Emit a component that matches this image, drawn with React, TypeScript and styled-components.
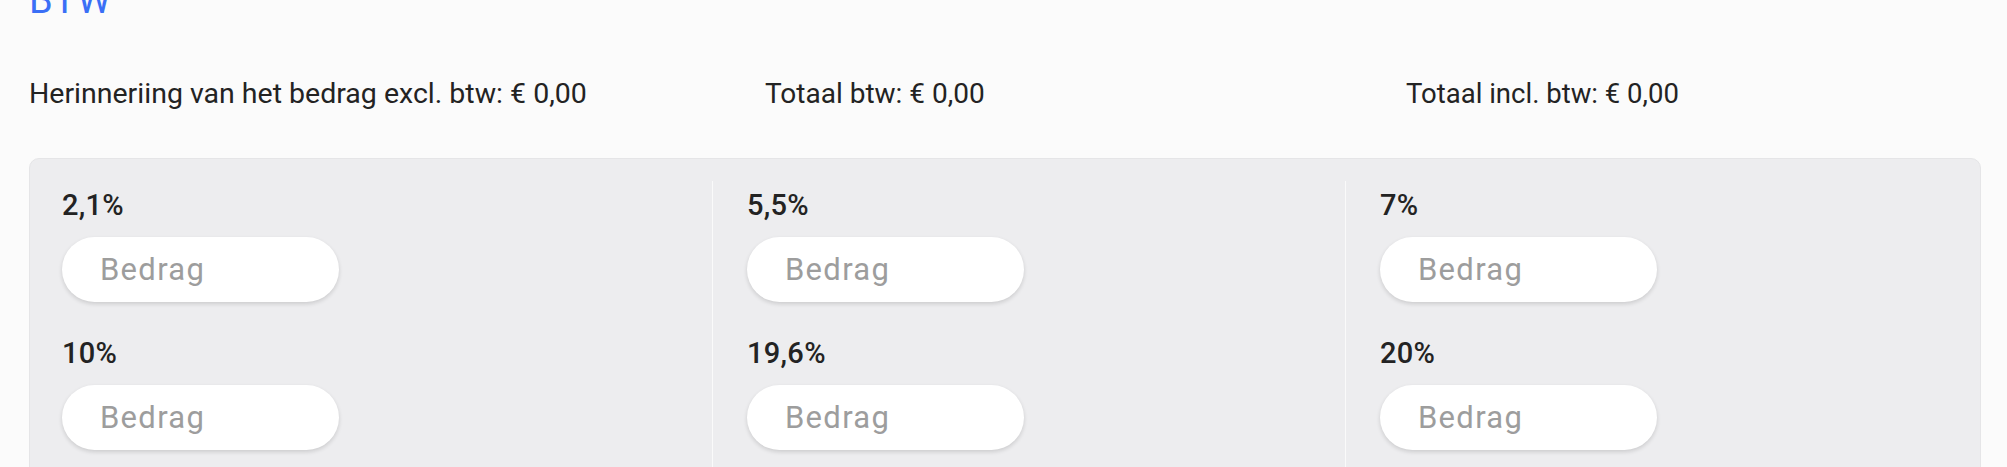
import React, { FC } from 'react'
import styled, { createGlobalStyle } from 'styled-components'

let GlobalStyle = createGlobalStyle`
	html, body {
		margin: 0;
		padding: 0;
		background: #fbfbfb;
		font-family: Roboto, "Liberation Sans", Arial, sans-serif;
		color: #222222;
	}
`

let Page = styled.div`
	padding: 0 26px 0 29px;
	overflow: hidden;
	height: 467px;
	box-sizing: border-box;
`

let Title = styled.h2`
	margin: -22px 0 0;
	font-size: 38px;
	line-height: 1.2;
	font-weight: 400;
	letter-spacing: 1px;
	color: #3a6ff6;
`

let Summary = styled.div`
	display: grid;
	grid-template-columns: 736px 641px 1fr;
	margin-top: 53px;
`

let SummaryItem = styled.div<{ size?: number }>`
	font-size: ${p => p.size ? `${p.size}px` : '28px'};
	line-height: 34px;
	color: #232323;
	white-space: nowrap;
`

let Panel = styled.div`
	margin-top: 47px;
	display: grid;
	grid-template-columns: 682px 633px 1fr;
	background: #ededef;
	border: 1px solid #e5e5e7;
	border-radius: 10px;
	padding: 22px 0 40px;
`

let Column = styled.div<{ divided?: boolean }>`
	display: flex;
	flex-direction: column;
	align-items: flex-start;
	padding: 7px 0 0 ${p => p.divided ? '34px' : '32px'};
	border-left: ${p => p.divided ? '1px solid #fafafa' : 'none'};
`

let Field = styled.div`
	display: flex;
	flex-direction: column;
	align-items: flex-start;
	gap: 15px;
	margin-bottom: 34px;
`

let Label = styled.label`
	font-size: 29px;
	line-height: 34px;
	font-weight: 500;
	letter-spacing: 0.3px;
	color: #232323;
`

let Input = styled.input`
	width: 277px;
	height: 65px;
	box-sizing: border-box;
	border: none;
	outline: none;
	border-radius: 33px;
	background: #ffffff;
	box-shadow: 0 2px 4px rgba(0, 0, 0, 0.14);
	padding: 0 0 0 38px;
	font-family: Roboto, "Liberation Sans", Arial, sans-serif;
	font-size: 31px;
	letter-spacing: 1.3px;
	color: #222222;

	&::placeholder {
		color: #9d9d9d;
	}
`

let rates = [
	['2,1%', '10%'],
	['5,5%', '19,6%'],
	['7%', '20%'],
]

let RateField: FC<{ rate: string }> = ({ rate }) => {
	return (
		<Field>
			<Label>{rate}</Label>
			<Input placeholder="Bedrag" />
		</Field>
	)
}

export default function App() {
	return (
		<>
			<GlobalStyle />
			<Page>
				<Title>BTW</Title>
				<Summary>
					<SummaryItem size={28.5}>Herinneriing van het bedrag excl. btw: € 0,00</SummaryItem>
					<SummaryItem>Totaal btw: € 0,00</SummaryItem>
					<SummaryItem size={27.5}>Totaal incl. btw: € 0,00</SummaryItem>
				</Summary>
				<Panel>
					{rates.map((col, i) => (
						<Column key={i} divided={i > 0}>
							{col.map(rate => <RateField key={rate} rate={rate} />)}
						</Column>
					))}
				</Panel>
			</Page>
		</>
	)
}
